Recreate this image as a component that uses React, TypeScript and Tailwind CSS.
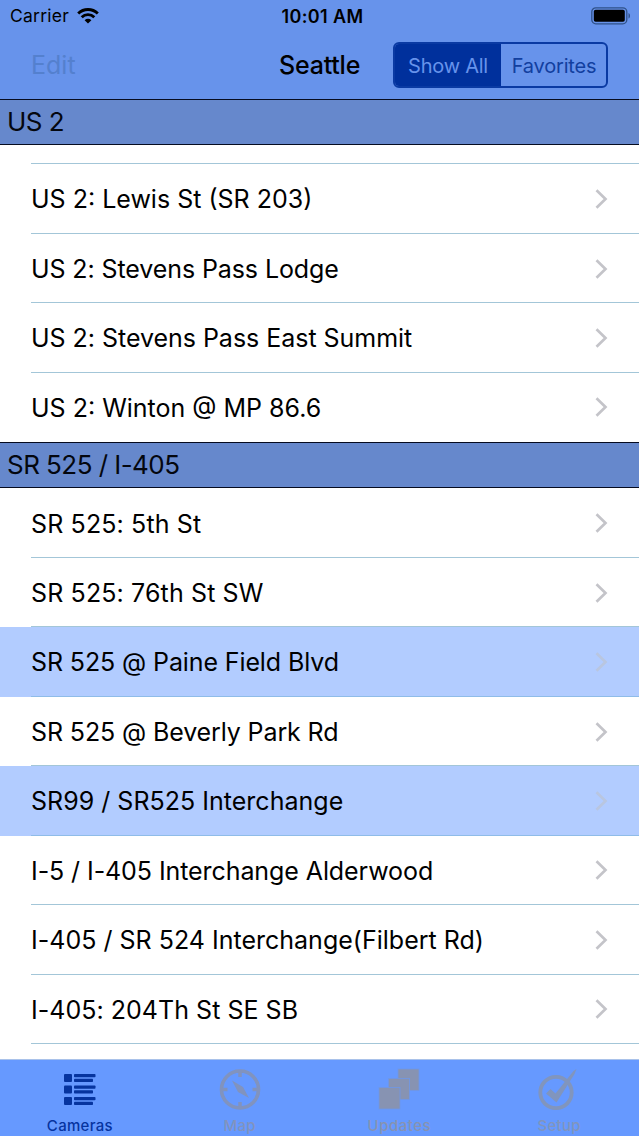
import React from "react";
import clsx from "clsx";

type Camera = {
  name: string;
  tracking: string;
  favorite?: boolean;
};

const us2: Camera[] = [
  { name: "US 2: Lewis St (SR 203)", tracking: "tracking-[0px]" },
  { name: "US 2: Stevens Pass Lodge", tracking: "tracking-[-0.1px]" },
  { name: "US 2: Stevens Pass East Summit", tracking: "tracking-[-0.03px]" },
  { name: "US 2: Winton @ MP 86.6", tracking: "tracking-[0px]" },
];

const sr525: Camera[] = [
  { name: "SR 525: 5th St", tracking: "tracking-[0.13px]" },
  { name: "SR 525: 76th St SW", tracking: "tracking-[0.13px]" },
  { name: "SR 525 @ Paine Field Blvd", tracking: "tracking-[-0.11px]", favorite: true },
  { name: "SR 525 @ Beverly Park Rd", tracking: "tracking-[-0.12px]" },
  { name: "SR99 / SR525 Interchange", tracking: "tracking-[0.02px]", favorite: true },
  { name: "I-5 / I-405 Interchange Alderwood", tracking: "tracking-[-0.08px]" },
  { name: "I-405 / SR 524 Interchange(Filbert Rd)", tracking: "tracking-[0.01px]" },
  { name: "I-405: 204Th St SE SB", tracking: "tracking-[0.03px]" },
];

function StatusBar() {
  return (
    <div className="grid h-8 grid-cols-3 items-center pl-[10px] pr-[7px]">
      <div className="flex items-center gap-[8px]">
        <span className="pt-[1px] text-[17.5px] tracking-[0.25px]">Carrier</span>
        <svg width="22" height="16" viewBox="0 0 22 16" fill="none" stroke="#000" strokeWidth="2.9">
          <path d="M1.2 5.5a14 14 0 0 1 19.6 0" />
          <path d="M4.7 9.2a9 9 0 0 1 12.6 0" />
          <path d="M11 15.6 7.6 12.2a4.9 4.9 0 0 1 6.8 0z" fill="#000" stroke="none" />
        </svg>
      </div>
      <div className="pl-[3px] pt-[1px] text-center text-[18px] font-semibold tracking-[0.4px]">10:01 AM</div>
      <svg className="mr-[1px] justify-self-end" width="40" height="18" viewBox="0 0 40 18">
        <rect x="0.8" y="0.8" width="35" height="16" rx="4" fill="none" stroke="#2f5189" strokeWidth="1.3" />
        <rect x="2.8" y="2.8" width="31" height="12" rx="1.8" fill="#000" />
        <path d="M37.5 6v5.6c2-.8 2-4.8 0-5.6z" fill="#2f5189" />
      </svg>
    </div>
  );
}

function NavBar() {
  return (
    <div className="flex h-[67px] items-center pb-[1px] pl-[31px] pr-[31px]">
      <span className="w-[248px] pt-[2px] text-[25px] text-[#5480ce]">Edit</span>
      <span className="flex-1 pt-[2px] text-[25px] font-medium tracking-[-0.2px]">Seattle</span>
      <div className="flex h-[46px] w-[215px] overflow-hidden rounded-[6px] border-2 border-[#0a3aa3] text-[20px]">
        <div className="flex w-[106px] items-center justify-center bg-[#00309c] pt-[1px] tracking-[-0.25px] text-[#6793eb]">Show All</div>
        <div className="flex flex-1 items-center justify-center pl-[1px] pt-[1px] tracking-[-0.2px] text-[#123f9f]">Favorites</div>
      </div>
    </div>
  );
}

function SectionHeader({ title }: { title: string }) {
  return (
    <div className="flex h-[46px] items-center border-y-[1.5px] border-[#060c20] bg-[#6688cc] pb-[2px] pl-[7px] text-[26px] tracking-[-0.55px] text-[#04070f]">
      {title}
    </div>
  );
}

function CameraRow({ camera, last }: { camera: Camera; last?: boolean }) {
  return (
    <div className={clsx("h-[69.45px] pl-[31px]", camera.favorite && "bg-[#b2ccff]")}>
      <div
        className={clsx(
          "flex h-full items-center justify-between border-b pr-[31px] pt-[1px]",
          last ? "border-transparent" : camera.favorite ? "border-[#8fbce8]" : "border-[#a3c6d8]"
        )}
      >
        <span className={clsx("whitespace-nowrap pt-[2px] text-[25px]", camera.tracking)}>{camera.name}</span>
        <svg
          className={camera.favorite ? "text-[#b9c6e0]" : "text-[#c4c4c9]"}
          width="13"
          height="20"
          viewBox="0 0 13 20"
          fill="none"
          stroke="currentColor"
          strokeWidth="2.7"
        >
          <path d="M1.5 1.2 10.5 10 1.5 18.8" />
        </svg>
      </div>
    </div>
  );
}

function TabBar() {
  return (
    <div className="flex h-[77px] border-t border-[#a9c2ea] bg-[#6699ff] text-[15px] leading-[18px]">
      <div className="flex flex-1 flex-col items-center text-[#06349f]">
        <svg className="mt-[8px]" width="42" height="44" viewBox="0 0 42 44" fill="currentColor">
          {[6, 17.5, 29].map((y) => (
            <g key={y}>
              <rect x="5" y={y} width="8" height="8" rx="1" />
              <rect x="15" y={y} width="21.5" height="3.2" rx="0.8" />
              <rect x="15" y={y + 4.8} width="19" height="3.2" rx="0.8" />
            </g>
          ))}
        </svg>
        <span className="mt-[5px] font-medium tracking-[0.3px]">Cameras</span>
      </div>
      <div className="flex flex-1 flex-col items-center text-[#8193be]">
        <svg className="mt-[8px]" width="42" height="44" viewBox="0 0 42 44">
          <circle cx="21" cy="21.5" r="18.5" fill="none" stroke="currentColor" strokeWidth="3.6" />
          <path d="M21 4v5M21 34v5M3.5 21.5h5M33.5 21.5h5" stroke="currentColor" strokeWidth="3.5" />
          <path d="M13 12.5 24 19l6 11-11-6z" fill="currentColor" />
        </svg>
        <span className="mt-[5px] font-medium tracking-[0.3px]">Map</span>
      </div>
      <div className="flex flex-1 flex-col items-center text-[#8793b2]">
        <svg className="mt-[8px]" width="42" height="44" viewBox="0 0 42 44" fill="currentColor">
          <g stroke="#6f97e6" strokeWidth="0.8">
            <rect x="20" y="1" width="21" height="21.500" />
            <rect x="10.5" y="10.5" width="21" height="21" />
            <rect x="1" y="19.500" width="21" height="21.500" />
          </g>
        </svg>
        <span className="mt-[5px] font-medium tracking-[0.5px]">Updates</span>
      </div>
      <div className="flex flex-1 flex-col items-center text-[#8195bd]">
        <svg className="mt-[8px]" width="42" height="44" viewBox="0 0 42 44">
          <circle cx="18" cy="24.5" r="15.7" fill="none" stroke="currentColor" strokeWidth="3.8" />
          <path d="M8 25.5 12.5 21l5 4.5L35.5 3l3-2-2 5L18.5 34.5z" fill="currentColor" />
        </svg>
        <span className="mt-[5px] font-medium tracking-[0.3px]">Setup</span>
      </div>
    </div>
  );
}

export default function App() {
  return (
    <div className="flex h-[1136px] w-[639px] flex-col overflow-hidden bg-white font-[Inter,sans-serif] text-black">
      <header className="h-[99px] shrink-0 bg-[#6793eb]">
        <StatusBar />
        <NavBar />
      </header>
      <main className="min-h-0 flex-1 overflow-hidden">
        <SectionHeader title="US 2" />
        {/* tail of the row scrolled under the header */}
        <div className="h-[19.4px] pl-[31px]">
          <div className="h-full border-b border-[#a3c6d8]" />
        </div>
        {us2.map((camera, i) => (
          <CameraRow key={camera.name} camera={camera} last={i === us2.length - 1} />
        ))}
        <SectionHeader title="SR 525 / I-405" />
        <div className="pt-[0.4px]">
          {sr525.map((camera) => (
            <CameraRow key={camera.name} camera={camera} />
          ))}
        </div>
      </main>
      <TabBar />
    </div>
  );
}
